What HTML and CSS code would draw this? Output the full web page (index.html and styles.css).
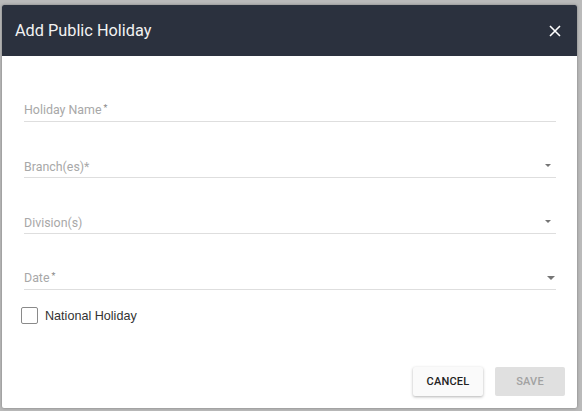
FILE: index.html
```html
<!DOCTYPE html>
<html>
<head>
<meta charset="utf-8">
<link rel="stylesheet" href="styles.css">
</head>
<body>
<div class="dialog">
  <div class="header">
    <span class="title">Add Public Holiday</span>
    <svg class="close" width="12" height="12" viewBox="0 0 12 12"><path d="M1 1L11 11M11 1L1 11" stroke="#fff" stroke-width="1.6" fill="none"/></svg>
  </div>
  <div class="form">
    <div class="field"><span class="label">Holiday Name<sup>*</sup></span></div>
    <div class="field"><span class="label">Branch(es)*</span><span class="arrow"></span></div>
    <div class="field"><span class="label">Division(s)</span><span class="arrow"></span></div>
    <div class="field"><span class="label">Date<sup>*</sup></span><span class="arrow big"></span></div>
    <label class="check"><span class="box"></span><span>National Holiday</span></label>
  </div>
  <div class="actions">
    <button class="btn cancel">CANCEL</button>
    <button class="btn save">SAVE</button>
  </div>
</div>
</body>
</html>
```
FILE: styles.css
```css
html, body { margin: 0; padding: 0; }
body {
  background: #bababa;
  font-family: Roboto, "Liberation Sans", sans-serif;
  width: 582px;
  height: 411px;
  box-sizing: border-box;
  padding: 5px 5px 3px 2px;
  overflow: hidden;
}
.dialog {
  width: 575px;
  height: 403px;
  background: #fff;
  border-radius: 2px;
  display: flex;
  flex-direction: column;
  box-shadow: 0 0 3px rgba(0,0,0,0.35);
  overflow: hidden;
}
.header {
  height: 51px;
  flex: none;
  background: #2b313e;
  display: flex;
  align-items: center;
  padding: 0 16px 0 13px;
  justify-content: space-between;
}
.title {
  color: #f2f2f2;
  font-size: 16.3px;
  font-weight: 400;
  margin-top: -1px;
}
.form {
  flex: 1;
  padding: 10px 21px 0 22px;
  display: flex;
  flex-direction: column;
}
.field {
  height: 56px;
  box-sizing: border-box;
  border-bottom: 1px solid #dedede;
  display: flex;
  align-items: flex-end;
  justify-content: space-between;
  padding-bottom: 3px;
}
.label {
  font-size: 12.4px;
  line-height: 14px;
  color: #a8a8a8;
}
.label sup {
  font-size: 9px;
  vertical-align: 0;
  position: relative;
  top: -3px;
  margin-left: 2px;
  color: #888;
}
.arrow {
  width: 0; height: 0;
  border-left: 3.5px solid transparent;
  border-right: 3.5px solid transparent;
  border-top: 3.5px solid #757575;
  margin-right: 5px;
  margin-bottom: 7px;
}
.arrow.big {
  border-left-width: 4px;
  border-right-width: 4px;
  border-top-width: 4px;
  margin-right: 1px;
  margin-bottom: 6px;
}
.check {
  margin-top: 17px;
  display: flex;
  align-items: center;
  margin-left: -3px;
  font-family: "Liberation Sans", Arial, sans-serif;
  font-size: 12.6px;
  color: #333;
}
.box {
  width: 15px;
  height: 15px;
  border: 1px solid #8a8a8a;
  border-radius: 2px;
  margin-right: 7px;
}
.actions {
  flex: none;
  display: flex;
  justify-content: flex-end;
  gap: 12px;
  padding: 0 12px 12px 0;
}
.btn {
  width: 70px;
  height: 29px;
  border: none;
  border-radius: 2px;
  font-family: Roboto, "Liberation Sans", sans-serif;
  font-size: 11px;
  font-weight: 500;
  letter-spacing: 0.2px;
  padding: 0;
}
.cancel {
  background: #fafafa;
  color: #222;
  box-shadow: 0 1px 3px rgba(0,0,0,0.3);
}
.save {
  background: #e0e0e0;
  color: #a2a2a2;
}
```
